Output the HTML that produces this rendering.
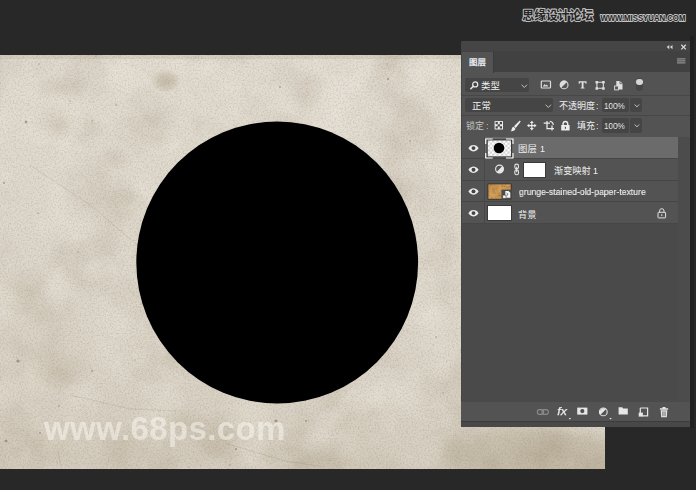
<!DOCTYPE html>
<html lang="zh">
<head>
<meta charset="utf-8">
<title>Layers</title>
<style>
*{box-sizing:border-box;margin:0;padding:0}
html,body{width:696px;height:490px;overflow:hidden;background:#282828}
body{position:relative;font-family:"Liberation Sans",sans-serif;font-size:9px;color:#e6e6e6}
.a{position:absolute;display:block}
svg.a{overflow:visible}
#canvas{left:0;top:54.500px;width:604.800px;height:414px;background:#d6cfc3;overflow:hidden}
#wm68{will-change:transform;left:43px;top:409px;font-weight:bold;font-size:33px;line-height:38px;color:rgba(255,253,246,.47);white-space:nowrap;letter-spacing:.38px}
#panel{left:461px;top:41px;width:229px;height:386px;background:#535353;border-top-left-radius:2px;overflow:hidden}
#edge{left:690px;top:36px;width:3.500px;height:392px;background:#212121}
.t{position:absolute;white-space:nowrap;line-height:12px;height:12px;will-change:transform;color:#efefef}
.box{position:absolute;background:#454545;border-radius:2px}
.row{position:absolute;left:0;width:217px;height:21.7px;border-bottom:1px solid #464646}
.ln{position:absolute;left:0;width:229px;height:1px;background:#474747}
</style>
</head>
<body>
<!-- document canvas -->
<div id="canvas" class="a">
<svg class="a" style="left:0;top:0" width="605" height="414" viewBox="0 0 605 414">
<defs>
<filter id="grain" color-interpolation-filters="sRGB" x="0" y="0" width="100%" height="100%">
<feTurbulence type="fractalNoise" baseFrequency="0.6" numOctaves="2" seed="3"/>
<feColorMatrix type="matrix" values="0 0 0 0 0.40  0 0 0 0 0.35  0 0 0 0 0.27  0 0 0 0.42 -0.18"/>
</filter>
<filter id="cloud" color-interpolation-filters="sRGB" x="0" y="0" width="100%" height="100%">
<feTurbulence type="fractalNoise" baseFrequency="0.016" numOctaves="4" seed="11"/>
<feColorMatrix type="matrix" values="0 0 0 0 0.52  0 0 0 0 0.45  0 0 0 0 0.33  0 0 0 0.45 -0.2"/>
</filter>
<filter id="cloudL" color-interpolation-filters="sRGB" x="0" y="0" width="100%" height="100%">
<feTurbulence type="fractalNoise" baseFrequency="0.022" numOctaves="3" seed="5"/>
<feColorMatrix type="matrix" values="0 0 0 0 1  0 0 0 0 0.99  0 0 0 0 0.96  0 0 0 0.6 -0.27"/>
</filter>
<linearGradient id="tone" x1="0.55" y1="0" x2="0.45" y2="1"><stop offset="0" stop-color="#78643c" stop-opacity="0"/><stop offset=".35" stop-color="#78643c" stop-opacity=".015"/><stop offset=".7" stop-color="#78643c" stop-opacity=".05"/><stop offset="1" stop-color="#78643c" stop-opacity=".11"/></linearGradient>
<radialGradient id="sm"><stop offset="0" stop-color="#8a7856" stop-opacity=".34"/><stop offset=".55" stop-color="#8a7856" stop-opacity=".2"/><stop offset="1" stop-color="#8a7856" stop-opacity="0"/></radialGradient>
<radialGradient id="sm3"><stop offset="0" stop-color="#857452" stop-opacity=".3"/><stop offset=".6" stop-color="#857452" stop-opacity=".22"/><stop offset="1" stop-color="#8a7856" stop-opacity="0"/></radialGradient>
<radialGradient id="sm2"><stop offset="0" stop-color="#8a7856" stop-opacity=".14"/><stop offset="1" stop-color="#8a7856" stop-opacity="0"/></radialGradient>
</defs>
<rect width="605" height="414" fill="#e1dbd0"/>
<rect width="605" height="414" fill="url(#tone)"/>
<rect width="605" height="414" filter="url(#cloud)"/>
<rect width="605" height="414" filter="url(#cloudL)"/>
<rect width="605" height="414" filter="url(#grain)"/>
<rect width="605" height="4" fill="#8a7856" opacity=".12"/>
<ellipse cx="166" cy="26" rx="15" ry="12" fill="url(#sm)"/>
<ellipse cx="56" cy="69" rx="26" ry="20" fill="url(#sm2)"/>
<ellipse cx="114" cy="103" rx="20" ry="15" fill="url(#sm2)"/>
<ellipse cx="60" cy="32" rx="30" ry="14" fill="url(#sm2)"/>
<ellipse cx="62" cy="314" rx="34" ry="22" fill="url(#sm2)"/>
<ellipse cx="184" cy="366" rx="26" ry="16" fill="url(#sm2)"/>
<ellipse cx="20" cy="236" rx="22" ry="30" fill="url(#sm2)"/>
<ellipse cx="535" cy="400" rx="110" ry="34" fill="url(#sm3)"/>
<ellipse cx="330" cy="405" rx="80" ry="22" fill="url(#sm2)"/>
<g fill="#5f523c"><circle cx="26" cy="67" r="1.4" opacity=".45"/><circle cx="4" cy="128" r="1.0" opacity=".45"/><circle cx="116" cy="50" r="0.8" opacity=".45"/><circle cx="18" cy="306" r="1.6" opacity=".45"/><circle cx="6" cy="386" r="1.3" opacity=".45"/><circle cx="280" cy="32" r="0.9" opacity=".45"/><circle cx="388" cy="24" r="1.1" opacity=".45"/><circle cx="410" cy="86" r="0.8" opacity=".45"/><circle cx="236" cy="394" r="1.0" opacity=".45"/><circle cx="306" cy="366" r="0.9" opacity=".45"/><circle cx="275" cy="84" r="0.8" opacity=".45"/><circle cx="70" cy="46" r="0.7" opacity=".45"/><circle cx="276" cy="366" r="1.5" opacity=".45"/><circle cx="387" cy="10" r="0.7" opacity="0.22"/><circle cx="135" cy="305" r="1.0" opacity="0.22"/><circle cx="357" cy="13" r="0.5" opacity="0.22"/><circle cx="141" cy="249" r="1.0" opacity="0.22"/><circle cx="433" cy="290" r="0.8" opacity="0.22"/><circle cx="272" cy="115" r="0.5" opacity="0.22"/><circle cx="422" cy="141" r="0.6" opacity="0.22"/><circle cx="579" cy="139" r="0.5" opacity="0.3"/><circle cx="59" cy="351" r="1.0" opacity="0.3"/><circle cx="488" cy="302" r="1.0" opacity="0.22"/><circle cx="589" cy="157" r="1.0" opacity="0.3"/><circle cx="502" cy="256" r="0.7" opacity="0.38"/><circle cx="116" cy="29" r="0.6" opacity="0.3"/><circle cx="596" cy="354" r="0.5" opacity="0.3"/><circle cx="168" cy="263" r="0.7" opacity="0.22"/><circle cx="224" cy="87" r="0.7" opacity="0.38"/><circle cx="567" cy="268" r="1.0" opacity="0.38"/><circle cx="104" cy="302" r="0.6" opacity="0.3"/><circle cx="230" cy="410" r="1.0" opacity="0.22"/><circle cx="414" cy="349" r="0.5" opacity="0.22"/><circle cx="497" cy="333" r="0.8" opacity="0.3"/><circle cx="40" cy="378" r="1.0" opacity="0.38"/><circle cx="190" cy="271" r="0.8" opacity="0.38"/><circle cx="278" cy="110" r="0.6" opacity="0.38"/><circle cx="340" cy="109" r="1.0" opacity="0.3"/><circle cx="543" cy="165" r="0.6" opacity="0.22"/><circle cx="308" cy="38" r="0.5" opacity="0.22"/><circle cx="92" cy="66" r="0.8" opacity="0.38"/><circle cx="38" cy="158" r="0.8" opacity="0.38"/><circle cx="152" cy="229" r="0.5" opacity="0.38"/><circle cx="436" cy="282" r="1.0" opacity="0.3"/><circle cx="465" cy="141" r="0.7" opacity="0.3"/><circle cx="96" cy="1" r="0.7" opacity="0.38"/><circle cx="461" cy="210" r="0.5" opacity="0.38"/><circle cx="181" cy="265" r="1.0" opacity="0.22"/><circle cx="92" cy="316" r="1.0" opacity="0.38"/><circle cx="556" cy="248" r="0.8" opacity="0.22"/><circle cx="68" cy="150" r="0.7" opacity="0.22"/><circle cx="35" cy="363" r="0.5" opacity="0.22"/><circle cx="443" cy="338" r="1.0" opacity="0.22"/><circle cx="78" cy="197" r="1.0" opacity="0.22"/><circle cx="160" cy="361" r="0.8" opacity="0.22"/><circle cx="562" cy="313" r="0.6" opacity="0.38"/><circle cx="189" cy="412" r="0.7" opacity="0.3"/><circle cx="544" cy="187" r="0.6" opacity="0.22"/><circle cx="39" cy="9" r="1.0" opacity="0.22"/></g>
<path d="M30 110l60 40 52 44M62 418l-4-22M70 340l60 14 46 2M225 388l60 18 40 6" fill="none" stroke="#7d6f57" stroke-width=".6" opacity=".28"/>
<circle cx="277.2" cy="207.5" r="140.9" fill="#000"/>
</svg>
<div id="wm68" class="a" style="left:44px;top:355px">www.68ps.com</div>
</div>

<!-- top-right forum watermark -->
<svg class="a" style="left:515px;top:4px" width="181" height="26" viewBox="515 4 181 26">
<text x="522.3" y="20.3" font-family="Liberation Sans, Noto Sans CJK SC, sans-serif" font-weight="bold" font-size="12" textLength="71" lengthAdjust="spacingAndGlyphs" fill="#252525" stroke="#bdbdbd" stroke-width="2.1" stroke-linejoin="round" paint-order="stroke">思缘设计论坛</text>
<text x="600.4" y="20.5" font-family="Liberation Sans, sans-serif" font-weight="bold" font-size="8.2" textLength="85" lengthAdjust="spacingAndGlyphs" fill="#252525" stroke="#c4c4c4" stroke-width="1.8" stroke-linejoin="round" paint-order="stroke">WWW.MISSYUAN.COM</text>
</svg>

<div id="edge" class="a"></div>

<!-- layers panel -->
<div id="panel" class="a">
  <div class="a" style="left:0;top:0;width:229px;height:10px;background:#454545"></div>
  <div class="a" style="left:0;top:10px;width:229px;height:21px;background:#414141"></div>
  <div class="a" style="left:0;top:10.500px;width:32.600px;height:21px;background:#535353;border-right:1px solid #3b3b3b"></div>
  <svg class="a" style="left:7.399999999999977px;top:14.55px" width="21" height="12" viewBox="-1 -9.35 21 12"><text x="0" y="0" font-family="Liberation Sans, Noto Sans CJK SC, sans-serif" font-size="8.5" fill="#e9edf2" stroke="#e9edf2" stroke-width="0.3">图层</text></svg>
  <!-- collapse / close -->
  <svg class="a" style="left:204px;top:2px" width="24" height="8" viewBox="0 0 24 8">
    <path d="M4.300 2v4.200L1.700 4.100zM7.500 2v4.200L4.900 4.100z" fill="#d4d4d4"/>
    <path d="M16.300 1.700l4.500 4.700M20.800 1.700l-4.500 4.700" stroke="#d8d8d8" stroke-width="1.300" fill="none"/>
  </svg>
  <!-- panel menu -->
  <svg class="a" style="left:216px;top:17px" width="9" height="7" viewBox="0 0 9 7">
    <path d="M0 .2h8.400v1.300H0zM0 2.200h8.400v1.300H0zM0 4.200h8.400v1.300H0z" fill="#8f8f8f"/>
  </svg>

  <!-- filter row -->
  <div class="box" style="left:4px;top:37px;width:64px;height:14px"></div>
  <svg class="a" style="left:9px;top:40px" width="9" height="9" viewBox="0 0 9 9">
    <circle cx="5.200" cy="3.400" r="2.500" fill="none" stroke="#e6e6e6" stroke-width="1.300"/>
    <path d="M3.400 5.200L.8 7.800" stroke="#e6e6e6" stroke-width="1.500" stroke-linecap="round"/>
  </svg>
  <svg class="a" style="left:60px;top:43px" width="7" height="5" viewBox="0 0 7 5"><path d="M.6.7l2.700 2.800L6 .7" fill="none" stroke="#c6c6c6" stroke-width=".95"/></svg>
  <!-- filter icons -->
  <svg class="a" style="left:79px;top:38.300px" width="86" height="13" viewBox="0 0 86 13">
    <rect x="1.300" y="2" width="9.200" height="7" rx=".8" fill="none" stroke="#dedede" stroke-width="1.200"/>
    <path d="M2.800 7.600l1.700-2.600 1.200 1.600 1-1 1.700 2z" fill="#dedede"/>
    <circle cx="24.100" cy="5.900" r="3.900" fill="#555" stroke="#dedede" stroke-width="1.100"/>
    <path d="M21.200 8.800A4.100 4.100 0 0 1 27 3z" fill="#dedede"/>
    <path d="M38.700 2.300h7.800v2.400h-.9l-.4-1.200h-1.700v4.900l1 .3v.8h-3.800v-.8l1-.3V3.500H40l-.4 1.200h-.9z" fill="#e2e2e2"/>
    <path d="M56.900 3.300h6.400v6h-6.400z" fill="none" stroke="#dedede" stroke-width="1.100"/>
    <path d="M55.500 1.900h2.500v2.500h-2.500zM62.200 1.900h2.500v2.500h-2.500zM55.500 8.200h2.500v2.500h-2.500zM62.200 8.200h2.500v2.500h-2.500z" fill="#dedede"/>
    <path d="M76.300 2h3.600l2.600 2.600v6h-6.200z" fill="#dedede"/>
    <path d="M79.900 2v2.600h2.600" fill="none" stroke="#535353" stroke-width=".7"/>
    <rect x="74.600" y="7" width="3.800" height="3.900" fill="#555" stroke="#dedede" stroke-width=".9"/>
  </svg>
  <!-- filter toggle -->
  <div class="a" style="left:175px;top:37.400px;width:6.800px;height:12.800px;border-radius:3.400px;background:#464646"></div>
  <div class="a" style="left:175.100px;top:37.600px;width:6.600px;height:6.600px;border-radius:50%;background:#d6d6d6"></div>
  <svg class="a" style="left:19px;top:37.86px" width="22" height="14" viewBox="-1 -10.34 22 14"><text x="0" y="0" font-family="Liberation Sans, Noto Sans CJK SC, sans-serif" font-size="9.4" fill="#efefef">类型</text></svg>

  <div class="ln" style="top:54px"></div>
  <!-- blend row -->
  <div class="box" style="left:4px;top:57.300px;width:88px;height:14px"></div>
  <svg class="a" style="left:83.500px;top:63px" width="7" height="5" viewBox="0 0 7 5"><path d="M.6.7l2.700 2.800L6 .7" fill="none" stroke="#c6c6c6" stroke-width=".95"/></svg>
  <svg class="a" style="left:9.600000000000023px;top:57.96px" width="22" height="14" viewBox="-1 -10.34 22 14"><text x="0" y="0" font-family="Liberation Sans, Noto Sans CJK SC, sans-serif" font-size="9.4" fill="#efefef">正常</text></svg>
  <svg class="a" style="left:97px;top:58.40px" width="40" height="13" viewBox="-1 -9.90 40 13"><text x="0" y="0" font-family="Liberation Sans, Noto Sans CJK SC, sans-serif" font-size="9" fill="#efefef">不透明度</text></svg>
  <div class="t" style="left:134.600px;top:58.600px;font-size:9px">:</div>
  <div class="box" style="left:140.600px;top:57.200px;width:27.200px;height:14.200px"></div>
  <div class="t" style="left:142.600px;top:58.500px;font-size:9.600px;transform-origin:0 50%;transform:scaleX(.85)">100%</div>
  <div class="box" style="left:169.300px;top:57.200px;width:11.800px;height:14.200px"></div>
  <svg class="a" style="left:172.500px;top:63px" width="7" height="5" viewBox="0 0 7 5"><path d="M.7.500l2.200 2.400L5.100.5" fill="none" stroke="#c6c6c6" stroke-width=".95"/></svg>

  <div class="ln" style="top:74px"></div>
  <!-- lock row -->
  <svg class="a" style="left:4.300000000000011px;top:78.40px" width="22" height="13" viewBox="-1 -9.90 22 13"><text x="0" y="0" font-family="Liberation Sans, Noto Sans CJK SC, sans-serif" font-size="9" fill="#c4c4c4">锁定</text></svg>
  <div class="t" style="left:24.500px;top:78.600px;font-size:9px;color:#c4c4c4">:</div>
  <svg class="a" style="left:32px;top:79px" width="80" height="13" viewBox="0 0 80 13">
    <!-- transparency lock -->
    <rect x="1.600" y="1.100" width="8.400" height="8.400" fill="#ececec"/>
    <path d="M2.600 2.100h2.200v2.200H2.600zM6.800 2.100H9v2.200H6.800zM4.700 4.200h2.200v2.200H4.700zM2.600 6.300h2.200v2.200H2.600zM6.800 6.300H9v2.200H6.800z" fill="#484848"/>
    <!-- brush -->
    <path d="M26.300.9c.7-.6 1.700.3 1.100 1.100l-4.700 6-1.700-1.700z" fill="#ececec"/>
    <path d="M20.600 6.700l1.800 1.800c-.2 1.900-2.200 3.100-4.900 2.700 1.200-.8 1-1.700 1.400-2.800.3-.9 1-1.500 1.700-1.700z" fill="#ececec"/>
    <!-- move -->
    <path d="M38.800.8l2 2.300h-1.400v1.900h1.900V3.700l2.300 1.900-2.300 1.900V6.200h-1.900v1.900h1.400l-2 2.300-2-2.300h1.400V6.200h-1.900v1.300L34 5.600l2.300-1.900V5h1.900V3.100h-1.400z" fill="#ececec"/>
    <!-- crop -->
    <path d="M54 1v7.600h7M50.700 3.200h3.300M54 3.200h3M59 5.600v4.900" fill="none" stroke="#ececec" stroke-width="1.250"/>
    <path d="M56.800 1.200c2 .3 3.300 1.500 3.600 3.600" fill="none" stroke="#ececec" stroke-width="1.100"/>
    <!-- lock all -->
    <path d="M68.200 5.100h8.400v5.400h-8.400z" fill="#ececec"/>
    <path d="M70.100 5.300V3.800a2.300 2.300 0 0 1 4.600 0v1.500" fill="none" stroke="#ececec" stroke-width="1.400"/>
    <rect x="71.800" y="6.800" width="1.200" height="2" fill="#505050"/>
  </svg>
  <svg class="a" style="left:115px;top:78.40px" width="22" height="13" viewBox="-1 -9.90 22 13"><text x="0" y="0" font-family="Liberation Sans, Noto Sans CJK SC, sans-serif" font-size="9" fill="#efefef">填充</text></svg>
  <div class="t" style="left:134.600px;top:78.600px;font-size:9px">:</div>
  <div class="box" style="left:140.600px;top:77.300px;width:27.200px;height:14.300px"></div>
  <div class="t" style="left:142.600px;top:78.700px;font-size:9.600px;transform-origin:0 50%;transform:scaleX(.85)">100%</div>
  <div class="box" style="left:169.300px;top:77.300px;width:11.800px;height:14.300px"></div>
  <svg class="a" style="left:172.500px;top:83.200px" width="7" height="5" viewBox="0 0 7 5"><path d="M.7.500l2.200 2.400L5.100.5" fill="none" stroke="#c6c6c6" stroke-width=".95"/></svg>

  <!-- layer list -->
  <div class="a" id="list" style="left:0;top:96.200px;width:229px;height:265.200px;background:#4a4a4a">
    <div class="a" style="left:217px;top:0;width:12px;height:265.200px;background:#4c4c4c"></div>
    <div class="row" style="top:0;background:#535353"><div class="a" style="left:23.500px;top:0;width:193.500px;height:21px;background:#6b6b6b"></div></div>
    <div class="row" style="top:21.700px;background:#535353"></div>
    <div class="row" style="top:43.400px;background:#535353"></div>
    <div class="row" style="top:65.100px;background:#535353"></div>
    <div class="a" style="left:23px;top:0;width:1px;height:86.800px;background:#474747"></div>
    <!-- eyes -->
    <svg class="a" style="left:7px;top:0" width="12" height="87" viewBox="0 0 12 87">
      <defs><g id="eye"><path d="M.4 0C2-2.600 4-3.200 5.500-3.200S9-2.600 10.600 0C9 2.600 7 3.200 5.500 3.200S2 2.600.4 0z" fill="#ececec"/><circle cx="5.500" cy="-.1" r="1.950" fill="#444"/></g></defs>
      <use href="#eye" y="11.200"/><use href="#eye" y="32.800"/><use href="#eye" y="54.500"/><use href="#eye" y="76.200"/>
    </svg>
    <!-- row1: layer 1 thumb (selected, bracket frame) -->
    <svg class="a" style="left:24px;top:.5px" width="29" height="21" viewBox="0 0 29 21">
      <defs><pattern id="chk" width="4.400" height="4.400" patternUnits="userSpaceOnUse" x="2.700" y="2.400"><rect width="4.400" height="4.400" fill="#fff"/><path d="M0 0h2.200v2.200H0zM2.200 2.200h2.200v2.200H2.200z" fill="#d2d2d2"/></pattern></defs>
      <rect x="1.700" y="1.500" width="25.400" height="17.900" fill="#262626"/>
      <rect x="2.700" y="2.400" width="23.400" height="16" fill="url(#chk)"/>
      <circle cx="14" cy="10" r="5.300" fill="#000"/>
      <path d="M.7 6V.95h7M21 .95h7V6M28 14.900v5.050h-7M7.700 19.950h-7v-5.050" fill="none" stroke="#fff" stroke-width="1.100"/>
    </svg>
    <svg class="a" style="left:56px;top:4.86px" width="22" height="14" viewBox="-1 -10.34 22 14"><text x="0" y="0" font-family="Liberation Sans, Noto Sans CJK SC, sans-serif" font-size="9.4" fill="#efefef">图层</text></svg>
    <div class="t" style="left:78.500px;top:6.200px;font-size:9.200px">1</div>
    <!-- row2: gradient map adjustment -->
    <svg class="a" style="left:33px;top:26px" width="27" height="14" viewBox="0 0 27 14">
      <circle cx="5.500" cy="6" r="3.900" fill="#555" stroke="#e6e6e6" stroke-width="1.100"/>
      <path d="M2.600 8.900A4.100 4.100 0 0 0 8.400 3.100z" fill="#e6e6e6"/>
      <rect x="20.800" y="1.100" width="3.700" height="4.800" rx="1.800" fill="none" stroke="#e6e6e6" stroke-width="1.100"/>
      <rect x="20.800" y="6.900" width="3.700" height="4.800" rx="1.800" fill="none" stroke="#e6e6e6" stroke-width="1.100"/>
      <path d="M22.650 3.800v5.400" stroke="#e6e6e6" stroke-width="1.100"/>
    </svg>
    <div class="a" style="left:61.600px;top:24.400px;width:23.800px;height:16.200px;background:#fff;border:.6px solid #3a3a3a"></div>
    <svg class="a" style="left:91.60000000000002px;top:26.88px" width="40" height="13" viewBox="-1 -10.12 40 13"><text x="0" y="0" font-family="Liberation Sans, Noto Sans CJK SC, sans-serif" font-size="9.2" fill="#efefef">渐变映射</text></svg>
    <div class="t" style="left:131.500px;top:28px;font-size:9.200px">1</div>
    <!-- row3: smart object -->
    <svg class="a" style="left:26px;top:46px" width="26" height="18" viewBox="0 0 26 18">
      <defs><linearGradient id="pg" x1="0" y1="0" x2="1" y2="1"><stop offset="0" stop-color="#c08e4c"/><stop offset=".45" stop-color="#d2a05a"/><stop offset="1" stop-color="#b98746"/></linearGradient>
      <filter id="tg" color-interpolation-filters="sRGB" x="0" y="0" width="100%" height="100%"><feTurbulence type="fractalNoise" baseFrequency="0.35" numOctaves="2" seed="7"/><feColorMatrix type="matrix" values="0 0 0 0 0.45  0 0 0 0 0.28  0 0 0 0 0.1  0 0 0 0.9 -0.38"/></filter></defs>
      <rect x=".6" y=".6" width="23.900" height="15.900" fill="#2e2a24"/>
      <rect x="1.300" y="1.300" width="22.500" height="14.500" fill="url(#pg)"/>
      <rect x="1.300" y="1.300" width="22.500" height="14.500" filter="url(#tg)"/>
      <rect x="14.400" y="6.600" width="10.100" height="9.900" fill="#4c4c4c"/>
      <path d="M18.300 8h3.300l1.700 1.700v5h-5z" fill="#f4f4f4"/>
      <path d="M19.600 10.100l1.500 1.300-1.500 1.300" fill="none" stroke="#4c4c4c" stroke-width=".8"/>
      <rect x="15.800" y="12.100" width="3.200" height="3.200" fill="#f4f4f4" stroke="#4c4c4c" stroke-width=".6"/>
    </svg>
    <div class="t" style="left:57.800px;top:49.100px;font-size:9.900px;transform-origin:0 50%;transform:scaleX(.878);-webkit-text-stroke:.15px #efefef">grunge-stained-old-paper-texture</div>
    <!-- row4: background -->
    <div class="a" style="left:26.400px;top:67.900px;width:24.200px;height:16.300px;background:#fff;border:.6px solid #3a3a3a"></div>
    <svg class="a" style="left:56.39999999999998px;top:70.48px" width="22" height="13" viewBox="-1 -10.12 22 13"><text x="0" y="0" font-family="Liberation Sans, Noto Sans CJK SC, sans-serif" font-size="9.2" fill="#efefef">背景</text></svg>
    <svg class="a" style="left:196px;top:71px" width="10" height="11" viewBox="0 0 10 11">
      <rect x="1" y="4.300" width="7.600" height="5.600" rx=".6" fill="none" stroke="#e2e2e2" stroke-width="1"/>
      <path d="M2.600 4.300V2.900a2.200 2.200 0 0 1 4.400 0v1.400" fill="none" stroke="#e2e2e2" stroke-width="1"/>
      <rect x="4.300" y="6.200" width="1" height="1.900" fill="#e2e2e2"/>
    </svg>
  </div>

  <div class="a" style="left:0;top:2px;width:1px;height:384px;background:#454545"></div>
  <!-- bottom bar -->
  <div class="a" style="left:0;top:361.400px;width:229px;height:18.800px;background:#535353"></div>
  <div class="a" style="left:0;top:380px;width:229px;height:1.200px;background:#3c3c3c"></div>
  <div class="a" style="left:0;top:381.200px;width:229px;height:5px;background:#484848"></div>
  <svg class="a" style="left:74px;top:364px;will-change:transform" width="136" height="17" viewBox="0 0 136 17">
    <!-- link (dim) -->
    <rect x="2.300" y="4.600" width="6.400" height="4.800" rx="2.400" fill="none" stroke="#8c8c8c" stroke-width="1.100"/>
    <rect x="7" y="4.600" width="6.400" height="4.800" rx="2.400" fill="none" stroke="#8c8c8c" stroke-width="1.100"/>
    <!-- fx -->
    <text x="22.300" y="10.300" font-family="Liberation Sans, sans-serif" font-style="italic" font-size="11.500" textLength="9.600" lengthAdjust="spacingAndGlyphs" fill="#ececec" stroke="#ececec" stroke-width=".25">fx</text>
    <path d="M33.600 13h2.600l-1.300 1.500z" fill="#e6e6e6"/>
    <!-- mask -->
    <rect x="42.200" y="2.600" width="10.200" height="7" fill="#e6e6e6"/>
    <circle cx="47.300" cy="6.100" r="2.100" fill="#4e4e4e"/>
    <!-- adjustment -->
    <circle cx="68.300" cy="6.900" r="3.900" fill="none" stroke="#e6e6e6" stroke-width="1.100"/>
    <path d="M65.500 9.700A4 4 0 0 1 71.100 4.100z" fill="#e6e6e6"/>
    <path d="M74.300 13h2.600l-1.300 1.500z" fill="#e6e6e6"/>
    <!-- folder -->
    <path d="M83.600 2.200h3.600l.9 1.200h4.700v6.200h-9.200z" fill="#e6e6e6"/>
    <!-- new layer -->
    <path d="M105.300 3h7.300v7.800h-5.200M105.300 3v5.200" fill="none" stroke="#e6e6e6" stroke-width="1.200"/>
    <path d="M103.700 7.600h4.200v4h-4.200z" fill="#e6e6e6"/>
    <!-- trash -->
    <path d="M124.900 3.300h8.200v1.400h-8.200zM127.500 1.900h3v1.400h-3zM125.700 5.300h6.600l-.5 7h-5.600z" fill="#e6e6e6"/>
    <path d="M127.700 6.400v4.800M129 6.400v4.800M130.300 6.400v4.800" stroke="#535353" stroke-width=".6"/>
  </svg>
</div>
</body>
</html>
